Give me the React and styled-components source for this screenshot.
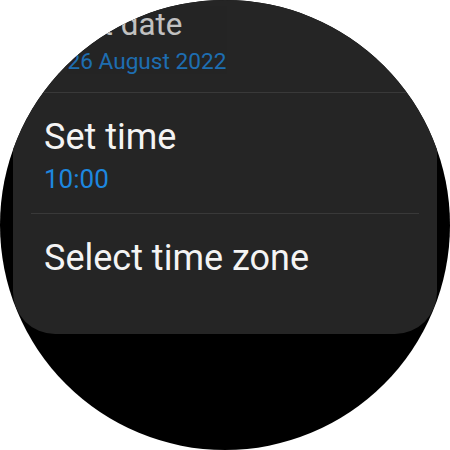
import React from "react";
import styled, { createGlobalStyle } from "styled-components";

const Global = createGlobalStyle`
  html, body { margin: 0; padding: 0; background: #ffffff; overflow: hidden; }
  body { font-family: Roboto, "Noto Sans", "Liberation Sans", sans-serif; }
`;

const Screen = styled.div`
  width: 450px;
  height: 450px;
  border-radius: 50%;
  background: #000000;
  overflow: hidden;
  display: flex;
  flex-direction: column;
`;

const Card = styled.div`
  margin: -28px 13px 0;
  background: #252525;
  border-radius: 0 0 42px 42px;
  padding-bottom: 37px;
  display: flex;
  flex-direction: column;
`;

const Row = styled.div`
  padding: 23px 31px 18px;
  display: flex;
  flex-direction: column;
  gap: 5px;
  transform: ${(p) => (p.$edge ? "scale(0.87)" : "none")};
  transform-origin: 50% 90%;
  opacity: ${(p) => (p.$edge ? 0.76 : 1)};
`;

const Title = styled.div`
  font-size: 36px;
  line-height: 42px;
  color: #f4f4f4;
  white-space: nowrap;
`;

const Value = styled.div`
  font-size: 26px;
  line-height: 32px;
  color: #1d87df;
  white-space: nowrap;
`;

const Divider = styled.div`
  height: 1px;
  margin: 0 18px;
  background: #393939;
`;

const items = [
  { title: "Set date", value: "26 August 2022", edge: true },
  { title: "Set time", value: "10:00" },
  { title: "Select time zone" },
];

export default function App() {
  return (
    <>
      <Global />
      <Screen>
        <Card>
          {items.map((it, i) => (
            <React.Fragment key={it.title}>
              {i > 0 && <Divider />}
              <Row $edge={it.edge}>
                <Title>{it.title}</Title>
                {it.value && <Value>{it.value}</Value>}
              </Row>
            </React.Fragment>
          ))}
        </Card>
      </Screen>
    </>
  );
}
